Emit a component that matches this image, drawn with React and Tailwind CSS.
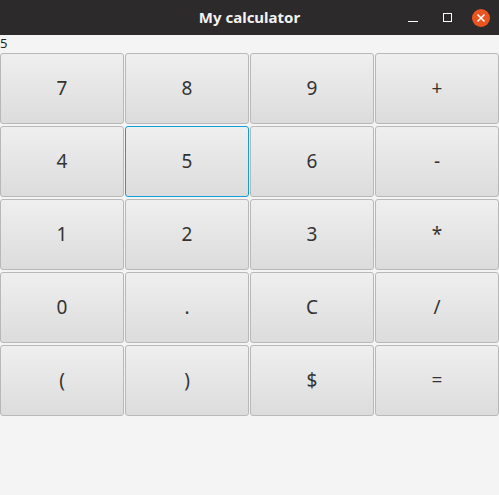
import React from "react";

const keys = [
  "7", "8", "9", "+",
  "4", "5", "6", "-",
  "1", "2", "3", "*",
  "0", ".", "C", "/",
  "(", ")", "$", "=",
];

export default function App() {
  return (
    <div className="w-[499px] h-[495px] bg-[#f4f4f4] flex flex-col" style={{ fontFamily: '"Noto Sans", "Open Sans", sans-serif' }}>
      {/* Title bar */}
      <div className="h-[35px] bg-[#2c2a2a] flex items-center relative shrink-0">
        <div className="flex-1 text-center text-[#f2f2f2] text-[15px] font-bold">My calculator</div>
        <div className="absolute right-0 top-0 h-[35px] flex items-center">
          <div className="w-[34px] flex justify-center">
            <div className="w-[10px] h-[1.5px] bg-white mt-[8px]"></div>
          </div>
          <div className="w-[34px] flex justify-center">
            <div className="w-[9px] h-[9px] border border-white"></div>
          </div>
          <div className="w-[18px] h-[18px] rounded-full bg-[#e95420] flex items-center justify-center mr-[9px] ml-[8px]">
            <svg width="10" height="10" viewBox="0 0 10 10">
              <path d="M1.5 1.5 L8.5 8.5 M8.5 1.5 L1.5 8.5" stroke="white" strokeWidth="1.5" />
            </svg>
          </div>
        </div>
      </div>

      {/* Display label */}
      <div className="h-[18px] text-[13px] leading-[16px] text-[#222] pl-0">5</div>

      {/* Keypad */}
      <div className="grid grid-cols-4 gap-x-px gap-y-[2px]">
        {keys.map((k) => (
          <button
            key={k}
            className={`h-[71px] rounded-[3px] border bg-gradient-to-b from-[#efefef] to-[#dcdcdc] text-[19px] text-[#333] flex items-center justify-center ${
              k === "5" ? "border-[#0ca0d8]" : "border-[#b8b8b8]"
            }`}
          >
            {k}
          </button>
        ))}
      </div>
    </div>
  );
}
